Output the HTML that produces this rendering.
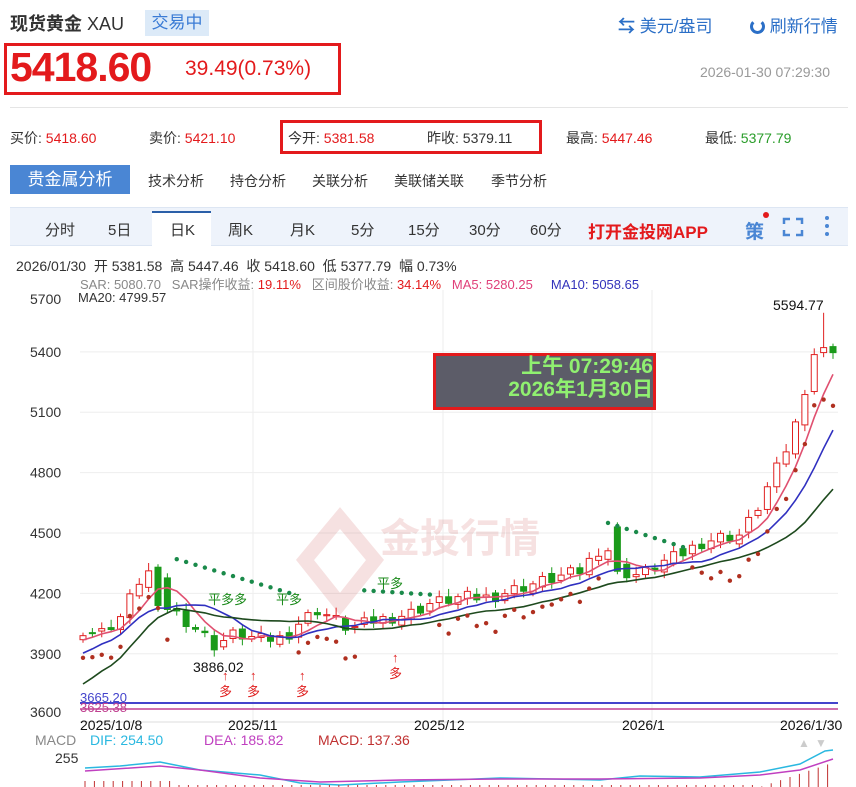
<!DOCTYPE html>
<html><head><meta charset="utf-8">
<style>
*{margin:0;padding:0;box-sizing:border-box}
body{width:856px;height:787px;overflow:hidden;background:#fff;font-family:"Liberation Sans","Noto Sans CJK SC",sans-serif;position:relative;color:#333}
.a{position:absolute;white-space:nowrap}
</style></head><body>
<div class="a" style="left:10px;top:10px;font-size:18px;font-weight:bold;color:#333">现货黄金 <span style="font-weight:normal">XAU</span></div>
<div class="a" style="left:145px;top:10px;width:64px;height:26px;background:#dceaf8;color:#3a7bd5;font-size:17px;text-align:center;line-height:26px">交易中</div>
<div class="a" style="left:618px;top:12px;font-size:17px;color:#2b6fc7"><span style="font-weight:bold">⇆</span> 美元/盎司</div>
<div class="a" style="left:750px;top:12px;font-size:17px;color:#2b6fc7"><span style="display:inline-block;width:15px;height:15px;border:3px solid #2b6fc7;border-top-color:transparent;border-radius:50%;vertical-align:-2px"></span> 刷新行情</div>
<div class="a" style="left:4px;top:43px;width:337px;height:52px;border:3px solid #e31a1c;"></div>
<div class="a" style="left:10px;top:44px;font-size:41px;font-weight:bold;color:#e31a1c;letter-spacing:-1px">5418.60</div>
<div class="a" style="left:185px;top:57px;font-size:21px;color:#e31a1c">39.49(0.73%)</div>
<div class="a" style="left:700px;top:64px;font-size:14px;color:#999">2026-01-30 07:29:30</div>
<div class="a" style="left:10px;top:107px;width:838px;height:1px;background:#e5e5e5"></div>
<div class="a" style="left:280px;top:120px;width:262px;height:34px;border:3px solid #e31a1c"></div>
<div class="a" style="left:10px;top:128px;font-size:14px;color:#333">买价: <span style="color:#e31a1c">5418.60</span></div>
<div class="a" style="left:149px;top:128px;font-size:14px">卖价: <span style="color:#e31a1c">5421.10</span></div>
<div class="a" style="left:288px;top:128px;font-size:14px">今开: <span style="color:#e31a1c">5381.58</span></div>
<div class="a" style="left:427px;top:128px;font-size:14px">昨收: 5379.11</div>
<div class="a" style="left:566px;top:128px;font-size:14px">最高: <span style="color:#e31a1c">5447.46</span></div>
<div class="a" style="left:705px;top:128px;font-size:14px">最低: <span style="color:#2a9d2a">5377.79</span></div>
<div class="a" style="left:10px;top:165px;width:120px;height:29px;background:#4a86d4;color:#fff;font-size:17px;line-height:29px;text-align:center">贵金属分析</div>
<div class="a" style="left:148px;top:171px;font-size:14px">技术分析</div>
<div class="a" style="left:230px;top:171px;font-size:14px">持仓分析</div>
<div class="a" style="left:312px;top:171px;font-size:14px">关联分析</div>
<div class="a" style="left:394px;top:171px;font-size:14px">美联储关联</div>
<div class="a" style="left:491px;top:171px;font-size:14px">季节分析</div>
<div class="a" style="left:10px;top:207px;width:838px;height:39px;background:#eef3fb;border-top:1px solid #dde6f3;border-bottom:1px solid #dde6f3"></div>
<div class="a" style="left:152px;top:211px;width:59px;height:36px;background:#fff;border-top:2px solid #2b5fa8"></div>
<div class="a" style="left:0;top:219px;font-size:15px;color:#333;width:856px">
<span class="a" style="left:45px">分时</span><span class="a" style="left:108px">5日</span><span class="a" style="left:170px">日K</span><span class="a" style="left:228px">周K</span><span class="a" style="left:290px">月K</span><span class="a" style="left:351px">5分</span><span class="a" style="left:408px">15分</span><span class="a" style="left:469px">30分</span><span class="a" style="left:530px">60分</span>
<span class="a" style="left:588px;top:-1px;color:#e31a1c;font-weight:bold;font-size:17px">打开金投网APP</span>
<span class="a" style="left:745px;top:-2px;color:#4a86d4;font-weight:bold;font-size:19px">策</span>
</div>
<div class="a" style="left:763px;top:212px;width:6px;height:6px;border-radius:50%;background:#e31a1c"></div>
<svg class="a" style="left:782px;top:217px" width="22" height="20"><path d="M2 7V2h6M14 2h6v5M20 13v5h-6M8 18H2v-5" fill="none" stroke="#4a86d4" stroke-width="2.5"/></svg>
<svg class="a" style="left:822px;top:215px" width="10" height="24"><circle cx="5" cy="3" r="2" fill="#4a86d4"/><circle cx="5" cy="11" r="2" fill="#4a86d4"/><circle cx="5" cy="19" r="2" fill="#4a86d4"/></svg>
<div class="a" style="left:16px;top:256px;font-size:14px;color:#333">2026/01/30 &nbsp;开 5381.58 &nbsp;高 5447.46 &nbsp;收 5418.60 &nbsp;低 5377.79 &nbsp;幅 0.73%</div>
<div class="a" style="left:80px;top:274px;font-size:13px;color:#888;background:#fff">SAR: 5080.70 &nbsp; SAR操作收益: <span style="color:#e31a1c">19.11%</span> &nbsp; 区间股价收益: <span style="color:#e31a1c">34.14%</span> &nbsp; <span style="color:#e0407a">MA5: 5280.25</span> &nbsp; &nbsp; <span style="color:#3333bb">MA10: 5058.65</span></div>
<svg class="a" id="ch" style="left:0;top:290px" width="856" height="497" font-family="Liberation Sans, Noto Sans CJK SC, sans-serif"></svg>
<div class="a" style="left:433px;top:353px;width:223px;height:57px;border:3px solid #e31a1c;background:#5c5c68"></div>
<div class="a" style="left:436px;top:355px;width:217px;text-align:right;color:#90f070;font-weight:bold;font-size:21px;line-height:23px;overflow:hidden">上午 07:29:46<br>2026年1月30日</div>
<script>
var s=document.getElementById('ch'),h='';
function Y(v){return 533-290+(4500-v)*0.2013;}
[5400,5100,4800,4500,4200,3900].forEach(function(v){h+='<line x1="80" x2="838" y1="'+Y(v)+'" y2="'+Y(v)+'" stroke="#eee"/>';h+='<text x="30" y="'+(Y(v)+5)+'" font-size="14" fill="#333">'+v+'</text>';});
h+='<text x="30" y="14" font-size="14" fill="#333">5700</text>';
h+='<text x="30" y="'+(Y(3600)+3)+'" font-size="14" fill="#333">3600</text>';
[253,443,652].forEach(function(x){h+='<line x1="'+x+'" x2="'+x+'" y1="0" y2="432" stroke="#eee"/>';});
h+='<line x1="80" x2="838" y1="432" y2="432" stroke="#ddd"/>';
h+='<g opacity="0.13"><path d="M340 518 L375 560 L340 604 L305 560Z" fill="none" stroke="#c02020" stroke-width="14" transform="translate(0,-290)"/><text x="380" y="262" font-size="40" fill="#c02020" font-weight="bold">金投行情</text></g>';
h+='<text x="78" y="12" font-size="13" fill="#333">MA20: 4799.57</text>';
h+='<line x1="80" x2="838" y1="413" y2="413" stroke="#4444cc" stroke-width="2"/><line x1="80" x2="838" y1="419" y2="419" stroke="#c04090" stroke-width="1.5"/>';
h+='<text x="80" y="412" font-size="13" fill="#4444cc">3665.20</text><text x="80" y="422" font-size="13" fill="#c04090">3625.38</text>';
var pts=[[83,4020],[100,4000],[120,4080],[140,4270],[152,4320],[165,4140],[180,4090],[200,4010],[215,3940],[235,4000],[260,3970],[285,3980],[300,4060],[318,4120],[335,4070],[350,4020],[370,4060],[390,4080],[410,4100],[430,4150],[460,4180],[490,4180],[520,4230],[550,4270],[580,4310],[605,4450],[618,4310],[640,4290],[660,4350],[680,4390],[700,4450],[720,4480],[740,4490],[755,4600],[770,4750],[785,4900],[800,5100],[812,5390],[822,5400],[833,5420]];
function P(x){for(var i=1;i<pts.length;i++)if(x<=pts[i][0]){var a=pts[i-1],b=pts[i];return a[1]+(b[1]-a[1])*(x-a[0])/(b[0]-a[0]);}return 5420;}
var c=[],xs=[];for(var i=0;i<81;i++){var x=83+i*9.375;xs.push(x);c.push(P(x)+((i*37)%11-5)*6);}
var o=c[0]-20;
for(var i=0;i<c.length;i++){var op=i?c[i-1]+((i*13)%7-3)*5:o,cl=c[i];if(i==57){op=4530;cl=4310}if(i==8){op=4330;cl=4140}var up=cl>=op,col=up?'#e02020':'#1a9a1a';var hi=Math.max(op,cl)+15+(i%4)*8,lo=Math.min(op,cl)-15-(i%3)*8;if(i==79)hi=5594;if(i==14)lo=3886;
h+='<line x1="'+xs[i]+'" x2="'+xs[i]+'" y1="'+Y(hi)+'" y2="'+Y(lo)+'" stroke="'+col+'"/>';
var t=Y(Math.max(op,cl)),hh=Math.max(1,Y(Math.min(op,cl))-t);h+='<rect x="'+(xs[i]-3)+'" y="'+t+'" width="6" height="'+hh+'" fill="'+(up?'#fff':col)+'" stroke="'+col+'"/>';}
function ma(n,col,off){var d='';for(var i=0;i<c.length;i++){var s0=0,k=0;for(var j=Math.max(0,i-n+1);j<=i;j++){s0+=c[j];k++;}var v=s0/k;v-=Math.max(0,off-i)*off*2.4;d+=(i?'L':'M')+xs[i].toFixed(1)+' '+Y(v).toFixed(1);}h+='<path d="'+d+'" fill="none" stroke="'+col+'" stroke-width="1.6"/>';}
ma(5,'#e05070',3);ma(10,'#3030c0',6);ma(20,'#1e4a1e',10);
for(var i=0;i<c.length;i++){var v,g=false;if(i>=10&&i<=22){v=4370-(i-10)*14;g=true;}else if(i>=30&&i<=37){v=4215-(i-30)*3;g=true}else if(i>=56&&i<=64){v=4550-(i-56)*15;g=true}else v=c[i]-110-((i%5)*10);if(!g&&i>66)v=c[i]-180-(i-66)*6;h+='<circle cx="'+xs[i]+'" cy="'+Y(v)+'" r="2.2" fill="'+(g?'#1a8a4a':'#b03020')+'"/>';}
h+='<text x="193" y="382" font-size="14" fill="#111">3886.02</text><text x="773" y="20" font-size="14" fill="#111">5594.77</text>';
[[222,'多'],[250,'多'],[299,'多'],[392,'多']].forEach(function(a){h+='<text x="'+a[0]+'" y="'+(a[0]==392?372:390)+'" font-size="13" fill="#e02020">↑<tspan x="'+(a[0]-3)+'" dy="16">'+a[1]+'</tspan></text>';});
h+='<text x="208" y="314" font-size="13" fill="#1a8a1a">平多多</text><text x="276" y="314" font-size="13" fill="#1a8a1a">平多</text><text x="377" y="298" font-size="13" fill="#1a8a1a">平多</text>';
[[80,'2025/10/8'],[228,'2025/11'],[414,'2025/12'],[622,'2026/1'],[780,'2026/1/30']].forEach(function(a){h+='<text x="'+a[0]+'" y="440" font-size="14" fill="#111">'+a[1]+'</text>';});
h+='<text x="35" y="455" font-size="14" fill="#888">MACD</text><text x="90" y="455" font-size="14" fill="#2ab8e0">DIF: 254.50</text><text x="204" y="455" font-size="14" fill="#c040c0">DEA: 185.82</text><text x="318" y="455" font-size="14" fill="#c03030">MACD: 137.36</text>';
h+='<text x="798" y="457" font-size="12" fill="#ccc">▲</text><text x="815" y="457" font-size="12" fill="#ccc">▼</text>';
h+='<text x="55" y="473" font-size="14" fill="#333">255</text>';
h+='<path d="M85 478 L120 476 L160 472 L200 480 L260 485 L300 493 L340 495 L400 492 L500 488 L600 490 L640 486 L700 487 L760 482 L800 474 L825 461 L833 460" fill="none" stroke="#2ab8e0" stroke-width="1.5"/>';
h+='<path d="M85 481 L160 476 L200 480 L260 488 L320 492 L400 490 L500 489 L600 489 L700 488 L760 485 L800 480 L833 469" fill="none" stroke="#c040c0" stroke-width="1.5"/>';
for(var x=85;x<833;x+=9.4){var hh=(x<170||x>760)?(x>760?(x-760)/3:6):2;h+='<line x1="'+x+'" x2="'+x+'" y1="497" y2="'+(497-hh)+'" stroke="#c03030"/>';}
s.innerHTML=h;
</script>
</body></html>
